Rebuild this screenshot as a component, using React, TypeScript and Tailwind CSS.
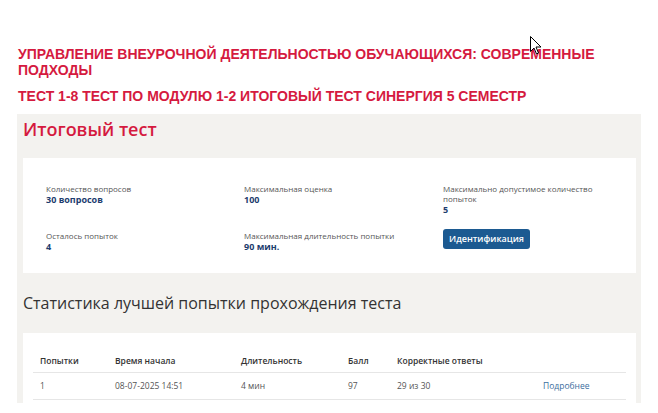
import React from 'react';

const info = [
  { label: 'Количество вопросов', value: '30 вопросов' },
  { label: 'Максимальная оценка', value: '100' },
  { label: 'Максимально допустимое количество попыток', value: '5' },
  { label: 'Осталось попыток', value: '4' },
  { label: 'Максимальная длительность попытки', value: '90 мин.' },
];

const columns = ['Попытки', 'Время начала', 'Длительность', 'Балл', 'Корректные ответы', ''];
const attempt = ['1', '08-07-2025 14:51', '4 мин', '97', '29 из 30'];

function InfoItem({ label, value }: { label: string; value: string }) {
  return (
    <div className="pr-4">
      <div className="text-[8px] leading-[10px] text-[#555]">{label}</div>
      <div className="text-[9px] leading-[12px] font-bold text-[#1d3d6e]">{value}</div>
    </div>
  );
}

export default function App() {
  return (
    <div
      className="relative w-[658px] h-[413px] overflow-hidden bg-white"
      style={{ fontFamily: '"Open Sans", "Noto Sans", sans-serif' }}
    >
      {/* Course heading */}
      <div
        className="pt-[46px] pl-[18px] pr-[40px] text-[#d51a3f] font-bold uppercase text-[14px] leading-[16px]"
        style={{ fontFamily: '"Liberation Sans", Arial, sans-serif' }}
      >
        <h1>Управление внеурочной деятельностью обучающихся: современные подходы</h1>
        <h2 className="mt-[10px]">Тест 1-8 тест по модулю 1-2 итоговый тест синергия 5 семестр</h2>
      </div>

      {/* Test panel */}
      <div className="mt-[10px] ml-[17px] w-[624px] h-[289px] bg-[#f3f2ef] pl-[6px] pr-[5px]">
        <div className="h-[44px] pt-[3px] leading-[24px] text-[18px] font-semibold text-[#d51a3f]">
          Итоговый тест
        </div>

        <div className="bg-white pt-[26px] pb-[20px] pl-[23px] grid grid-cols-[198px_199px_1fr] gap-y-[13px] leading-none">
          <InfoItem {...info[0]} />
          <InfoItem {...info[1]} />
          <InfoItem {...info[2]} />
          <div className="pt-[2px]">
            <InfoItem {...info[3]} />
          </div>
          <div className="pt-[2px]">
            <InfoItem {...info[4]} />
          </div>
          <div className="flex">
            <button className="h-[20px] w-[87px] rounded-[3px] bg-[#1c5a91] text-white text-[9px] leading-[20px] font-semibold">
              Идентификация
            </button>
          </div>
        </div>

        <div className="h-[60px] flex items-center text-[16px] text-[#333]">
          Статистика лучшей попытки прохождения теста
        </div>

        {/* Best attempt table */}
        <div className="bg-white h-[80px] pt-[18px] px-[10px] text-[8.5px]">
          <div className="grid grid-cols-[75px_126px_107px_49px_146px_1fr] h-[22px] items-center border-b border-[#e6e6e6] font-semibold text-[#333]">
            {columns.map((c, i) => (
              <div key={i} className="px-[7px]">{c}</div>
            ))}
          </div>
          <div className="grid grid-cols-[75px_126px_107px_49px_146px_1fr] h-[27px] items-center border-b border-[#e6e6e6] text-[#555]">
            {attempt.map((c, i) => (
              <div key={i} className="px-[7px]">{c}</div>
            ))}
            <div className="px-[7px] text-[#3b6e9e]">Подробнее</div>
          </div>
        </div>
      </div>

      {/* Mouse cursor */}
      <svg className="absolute left-[530px] top-[36px]" width="12" height="19" viewBox="0 0 12 19">
        <path d="M0.5 0.5 L0.5 15.5 L4 12 L6.5 18 L8.5 17 L6 11 L11 11 Z" fill="#fff" stroke="#000" strokeWidth="1" />
      </svg>
    </div>
  );
}
